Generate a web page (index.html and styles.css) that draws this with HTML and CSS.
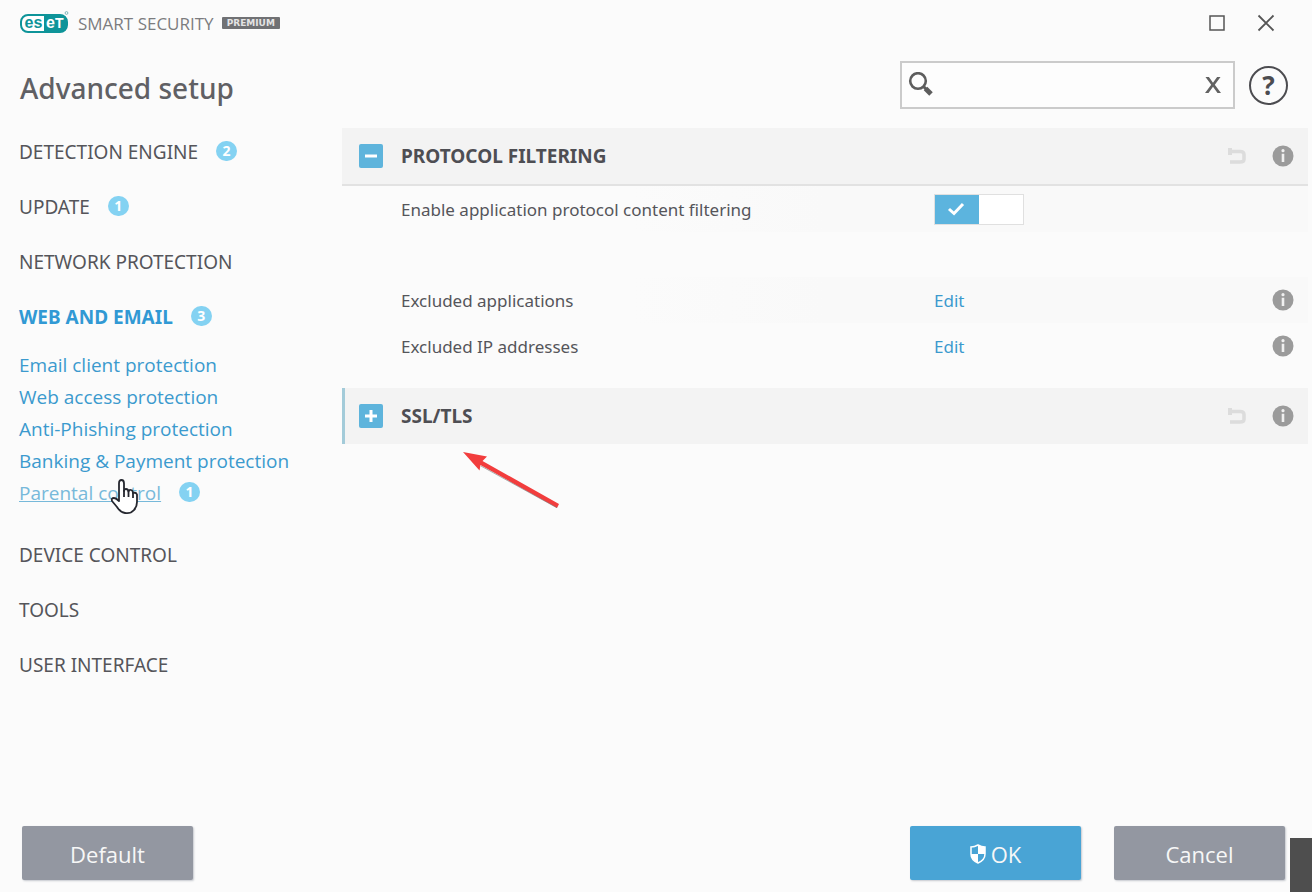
FILE: index.html
```html
<!DOCTYPE html>
<html lang="en">
<head>
<meta charset="utf-8">
<title>Advanced setup</title>
<link rel="stylesheet" href="styles.css">
</head>
<body>
<svg class="defs" aria-hidden="true">
  <symbol id="info" viewBox="0 0 22 22"><circle cx="11" cy="11" r="10.5" fill="#9b9b9b"/><circle cx="11" cy="5.7" r="1.6" fill="#f0f0f0"/><path d="M9.700 8.800h2.600v8.200h-2.600z" fill="#f0f0f0"/></symbol>
  <symbol id="undo" viewBox="0 0 20 18"><path d="M3 4.500h10q4 0 4 3v5q0 2.500-4 2.500H3" fill="none" stroke="#dcdcdc" stroke-width="3.500"/><path d="M1 1l4 0v7H1z" fill="#dcdcdc"/></symbol>
</svg>
<div class="window">
  <header class="titlebar">
    <svg class="logo" viewBox="0 0 50 24" role="img" aria-label="ESET">
      <rect x="1" y="4" width="46" height="17" rx="7" fill="#fff" stroke="#0e9499" stroke-width="2"/>
      <path d="M24 4h16q7 0 7 7v3q0 7-7 7H24z" fill="#0e9499"/>
      <text x="4.500" y="17" class="logo-text logo-teal">es</text>
      <text x="26" y="17" class="logo-text logo-white">e</text>
      <text x="35" y="17" class="logo-text logo-small">T</text>
      <circle cx="46.500" cy="2" r="1.400" fill="none" stroke="#80b9bb"/>
    </svg>
    <span class="product">SMART SECURITY</span>
    <span class="edition">PREMIUM</span>
    <div class="window-controls">
      <button class="win-btn" aria-label="Maximize"><svg viewBox="0 0 18 18"><rect x="2" y="2" width="14" height="14" fill="none" stroke="#555" stroke-width="1.500"/></svg></button>
      <button class="win-btn" aria-label="Close"><svg viewBox="0 0 18 18"><path d="M1.500 1.500l15 15M16.500 1.500l-15 15" stroke="#555" stroke-width="1.800"/></svg></button>
    </div>
  </header>

  <div class="heading">
    <h1>Advanced setup</h1>
    <label class="search">
      <svg class="search-icon" viewBox="0 0 26 26"><circle cx="10" cy="9" r="7.800" fill="none" stroke="#5d5d5d" stroke-width="2.600"/><path d="M15.500 14.500l2.500 2.500" stroke="#5d5d5d" stroke-width="3"/><path d="M17.500 16.500l5.500 5.500" stroke="#5d5d5d" stroke-width="5"/></svg>
      <input type="text" aria-label="Search">
      <button class="clear" aria-label="Clear search"><svg viewBox="0 0 16 16"><path d="M.500 0h3.400L8 5.800 12.100 0h3.400L9.800 7.700 16 16h-3.500L8 9.800 3.500 16H0l6.200-8.300z" fill="#626262"/></svg></button>
    </label>
    <button class="help" aria-label="Help">?</button>
  </div>

  <div class="content">
    <nav class="sidebar">
      <a class="nav-item" href="#">DETECTION ENGINE <span class="badge">2</span></a>
      <a class="nav-item" href="#">UPDATE <span class="badge">1</span></a>
      <a class="nav-item" href="#">NETWORK PROTECTION</a>
      <a class="nav-item active" href="#">WEB AND EMAIL <span class="badge">3</span></a>
      <div class="subnav">
        <a href="#">Email client protection</a>
        <a href="#">Web access protection</a>
        <a href="#">Anti-Phishing protection</a>
        <a href="#">Banking &amp; Payment protection</a>
        <a class="hovered" href="#"><span class="link-text">Parental control</span> <span class="badge">1</span></a>
      </div>
      <a class="nav-item" href="#">DEVICE CONTROL</a>
      <a class="nav-item" href="#">TOOLS</a>
      <a class="nav-item" href="#">USER INTERFACE</a>
    </nav>

    <main class="settings">
      <section>
        <div class="section-head open">
          <button class="expander" aria-label="Collapse Protocol filtering"><svg viewBox="0 0 24 24"><path d="M6 12h12" stroke="#fff" stroke-width="3"/></svg></button>
          <h2>PROTOCOL FILTERING</h2>
          <svg class="undo"><use href="#undo"/></svg>
          <svg class="info"><use href="#info"/></svg>
        </div>
        <div class="section-body">
          <div class="row shaded">
            <label for="filtering">Enable application protocol content filtering</label>
            <span class="toggle"><input type="checkbox" id="filtering" checked><svg viewBox="0 0 18 14"><path d="M2 7l5 4.500L16 2" fill="none" stroke="#fff" stroke-width="3"/></svg></span>
          </div>
          <div class="row spaced shaded">
            <span>Excluded applications</span>
            <a href="#">Edit</a>
            <svg class="info"><use href="#info"/></svg>
          </div>
          <div class="row">
            <span>Excluded IP addresses</span>
            <a href="#">Edit</a>
            <svg class="info"><use href="#info"/></svg>
          </div>
        </div>
      </section>
      <section>
        <div class="section-head marked">
          <button class="expander" aria-label="Expand SSL/TLS"><svg viewBox="0 0 24 24"><path d="M6 12h12M12 6v12" stroke="#fff" stroke-width="3"/></svg></button>
          <h2>SSL/TLS</h2>
          <svg class="undo"><use href="#undo"/></svg>
          <svg class="info"><use href="#info"/></svg>
        </div>
      </section>
    </main>
  </div>

  <footer class="footer">
    <button class="btn">Default</button>
    <div class="footer-right">
      <button class="btn primary"><svg class="shield" viewBox="0 0 16 20"><path d="M8 1q3.500 2 7 2v7q0 6-7 9-7-3-7-9V3q3.500 0 7-2z" fill="none" stroke="#fff" stroke-width="1.500"/><path d="M8 1q3.500 2 7 2v7H8zM1 10h7v9q-7-3-7-9z" fill="#fff"/></svg>OK</button>
      <button class="btn">Cancel</button>
    </div>
  </footer>

  <svg class="cursor" viewBox="0 0 28 36" aria-hidden="true"><path d="M8 21V4.500Q8 1 10.500 1T13 4.500V12q0-2 2-2t2.500 2.500q.5-2 2.500-1.500t2 3q3-1 4 1.500V23q0 5-3 8-3.500 4-9 3-5-1-8-6l-5-6q-1-3 2-3 2 0 5 3z" fill="#fff" stroke="#25272f" stroke-width="1.800" stroke-linejoin="round"/><path d="M13 11v7M17.500 12v6M22 14v5" stroke="#25272f" stroke-width="1.800"/></svg>
  <svg class="arrow" viewBox="0 0 96 56" aria-hidden="true"><path d="M0 0l24 4.500-4.500 4.500L96 52l-2 4L17.500 13 16.500 18.500z" fill="#f23d3d"/><path d="M94 55.800L18 14" stroke="#777" stroke-width=".6"/></svg>
  <div class="corner"></div>
</div>
</body>
</html>
```

FILE: styles.css
```css
* { box-sizing: border-box; }
body {
  margin: 0;
  background: #fbfbfb;
  color: #55555a;
  font-family: "Noto Sans", "Open Sans", sans-serif;
  font-size: 19px;
}
a { color: #3b9ace; text-decoration: none; }
button { font: inherit; border: 0; padding: 0; background: none; color: inherit; }
svg { display: block; flex: none; }
.defs { position: absolute; width: 0; height: 0; }

.window {
  position: relative;
  display: flex;
  flex-direction: column;
  min-height: 100vh;
  overflow: hidden;
}

.titlebar { display: flex; align-items: center; height: 46px; padding: 0 37px 0 20px; }
.logo { width: 50px; height: 24px; margin-right: 8px; overflow: visible; }
.logo-text { font: bold 16px "Liberation Sans", sans-serif; }
.logo-teal { fill: #0e9499; }
.logo-white { fill: #fff; }
.logo-small { font-size: 14px; fill: #fff; }
.product { font-family: "Open Sans", sans-serif; font-size: 17px; color: #7b7c7f; }
.edition {
  margin-left: auto;
  padding: 0 5px;
  border-radius: 1px;
  background: #707174;
  color: #e4e4e4;
  font: bold 9px/12px "DejaVu Sans", sans-serif;
}
.product + .edition { margin-left: 8px; }
.window-controls { display: flex; gap: 31px; margin-left: auto; }
.win-btn svg { width: 18px; height: 18px; }

.heading { display: flex; align-items: center; height: 78px; padding: 0 24px 0 20px; }
h1 { margin: 0 auto 0 0; padding-top: 5px; font-size: 28px; font-weight: 500; line-height: 40px; color: #606064; }
.search {
  display: flex;
  align-items: center;
  width: 335px;
  height: 48px;
  padding: 0 12px 0 6px;
  border: 2px solid #cbcbcb;
  background: #fdfdfd;
}
.search input { flex: 1; min-width: 0; border: 0; outline: 0; background: none; font: inherit; }
.search-icon { width: 26px; height: 26px; }
.clear svg { width: 16px; height: 16px; }
.help {
  width: 39px;
  height: 39px;
  margin-left: 14px;
  border: 2px solid #4c4c50;
  border-radius: 50%;
  color: #4c4c50;
  font-size: 26px;
  font-weight: 700;
  line-height: 34px;
}

.content { display: flex; flex: 1; }
.sidebar { display: flex; flex-direction: column; width: 342px; padding-left: 19px; }
.nav-item { display: flex; align-items: center; gap: 18px; height: 55px; color: #55555a; }
.nav-item.active { font-weight: 700; color: #3199d4; }
.badge {
  width: 21px;
  height: 20px;
  margin-bottom: 2px;
  border-radius: 10px;
  background: #84d2f2;
  color: #fff;
  font-size: 14px;
  font-weight: 700;
  line-height: 20px;
  text-align: center;
}
.subnav { display: flex; flex-direction: column; padding: 5px 0 18px; font-family: "Open Sans", sans-serif; }
.subnav a { display: flex; align-items: center; gap: 18px; height: 32px; }
.hovered .link-text { color: #77b9da; text-decoration: underline; }

.settings { flex: 1; padding: 4px 4px 0 0; }
.section-head {
  display: flex;
  align-items: center;
  height: 56px;
  padding: 0 14px 0 17px;
  background: #f3f3f3;
}
.section-head.open { height: 58px; border-bottom: 2px solid #e2e2e2; }
.section-head.marked { padding-left: 14px; border-left: 3px solid #a3cbd9; }
.expander { margin-right: 18px; border-radius: 2px; background: #5eb4dc; }
.expander svg { width: 24px; height: 24px; }
h2 { margin: 0 auto 0 0; font-size: 19px; font-weight: 700; color: #4e4e53; }
.undo { width: 20px; height: 18px; margin-right: 25px; }
.info { width: 22px; height: 22px; }
.section-body { padding-bottom: 19px; font-size: 17px; }
.row {
  display: grid;
  grid-template-columns: minmax(0, 533px) 1fr auto;
  align-items: center;
  height: 46px;
  padding: 0 14px 0 59px;
}
.row.shaded { background: linear-gradient(to right, #fbfbfb 30%, #f9f9f9 50%); }
.row.spaced { margin: 45px 0 0; }
.toggle {
  display: flex;
  align-items: center;
  position: relative;
  width: 90px;
  height: 31px;
  border: 1px solid #e0e0e0;
  background: linear-gradient(to right, #5cb4de 50%, #fff 50%);
}
.toggle input { position: absolute; inset: 0; width: 100%; height: 100%; margin: 0; opacity: 0; }
.toggle svg { width: 18px; height: 14px; margin-left: 12px; }

.footer { display: flex; justify-content: space-between; padding: 0 27px 12px 22px; }
.footer-right { display: flex; gap: 33px; }
.btn {
  display: flex;
  align-items: center;
  justify-content: center;
  gap: 5px;
  width: 171px;
  height: 54px;
  padding-top: 2px;
  border-radius: 2px;
  background: #9397a1;
  box-shadow: 1px 1px 2px #c5c8ce;
  color: #f7f7f7;
  font-family: "Open Sans", sans-serif;
  font-size: 22px;
}
.btn.primary { background: #49a4d5; }
.shield { width: 16px; height: 20px; }

.cursor { position: absolute; left: 111px; top: 479px; width: 28px; height: 36px; }
.arrow { position: absolute; left: 463px; top: 452px; width: 96px; height: 56px; }
.corner { position: absolute; right: 0; bottom: 0; width: 22px; height: 54px; background: #4e4e4e; }
```
